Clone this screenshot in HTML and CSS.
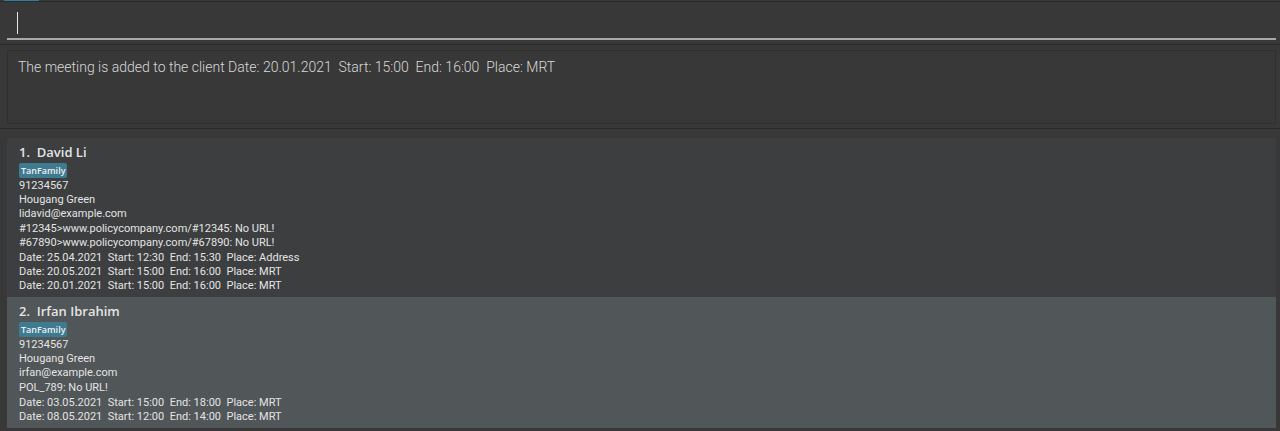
FILE: index.html
```
<!DOCTYPE html>
<html lang="en">
<head>
<meta charset="utf-8">
<meta name="viewport" content="width=device-width, initial-scale=1">
<title>Client book</title>
<link rel="stylesheet" href="styles.css">
</head>
<body>
<header class="menu"><span class="menu-marker"></span></header>
<section class="command">
  <input class="command-input" type="text" aria-label="Command">
  <span class="caret"></span>
</section>
<section class="result">
  <output class="result-box">The meeting is added to the client Date: 20.01.2021  Start: 15:00  End: 16:00  Place: MRT</output>
</section>
<main class="clients">
  <article class="card">
    <h2 class="name">1.  David Li</h2>
    <span class="tag">TanFamily</span>
    <div class="group">
      <p>91234567</p>
      <p>Hougang Green</p>
      <p>lidavid@example.com</p>
    </div>
    <div class="group">
      <p>#12345&gt;www.policycompany.com/#12345: No URL!</p>
      <p>#67890&gt;www.policycompany.com/#67890: No URL!</p>
    </div>
    <div class="group">
      <p>Date: 25.04.2021  Start: 12:30  End: 15:30  Place: Address</p>
      <p>Date: 20.05.2021  Start: 15:00  End: 16:00  Place: MRT</p>
      <p>Date: 20.01.2021  Start: 15:00  End: 16:00  Place: MRT</p>
    </div>
  </article>
  <article class="card card-alt">
    <h2 class="name">2.  Irfan Ibrahim</h2>
    <span class="tag">TanFamily</span>
    <div class="group">
      <p>91234567</p>
      <p>Hougang Green</p>
      <p>irfan@example.com</p>
    </div>
    <div class="group">
      <p>POL_789: No URL!</p>
    </div>
    <div class="group">
      <p>Date: 03.05.2021  Start: 15:00  End: 18:00  Place: MRT</p>
      <p>Date: 08.05.2021  Start: 12:00  End: 14:00  Place: MRT</p>
    </div>
  </article>
</main>
</body>
</html>
```
FILE: styles.css
```
* {
  box-sizing: border-box;
}

body {
  margin: 0;
  background: #383838;
  color: #e4e4e4;
  font-family: Roboto, "Open Sans", sans-serif;
  font-size: 11px;
  line-height: 14px;
}

.menu {
  height: 2px;
  padding-left: 4px;
  border-bottom: 1px solid #2b2b2b;
}

.menu-marker {
  display: block;
  width: 35px;
  height: 1px;
  background: #2f7f9c;
}

.command {
  position: relative;
  padding: 4px 4px 4px 7px;
  border-bottom: 1px solid #2b2b2b;
}

.command-input {
  display: block;
  width: 100%;
  height: 34px;
  padding: 4px 10px;
  border: 0;
  border-bottom: 2px solid #a9a9a9;
  outline: 0;
  background: transparent;
  color: #fff;
  font: inherit;
  font-size: 14px;
}

.caret {
  position: absolute;
  left: 17px;
  top: 10px;
  width: 1px;
  height: 22px;
  background: #e6e6e6;
}

.result {
  padding: 5px 4px 4px 7px;
  border-bottom: 1px solid #2b2b2b;
}

.result-box {
  display: block;
  min-height: 74px;
  padding: 6px 10px;
  border: 1px solid #2f2f2f;
  color: #d8d8d8;
  font-size: 14px;
  font-weight: 300;
  line-height: 20px;
  white-space: pre-wrap;
}

.clients {
  padding: 9px 4px 3px 7px;
}

.card {
  display: flex;
  flex-direction: column;
  align-items: flex-start;
  gap: 1px;
  padding: 5px 12px 4px;
  background: #3c3e3f;
}

.card-alt {
  background: #515658;
}

.name {
  margin: 0;
  font-family: "Open Sans", sans-serif;
  font-size: 13px;
  font-weight: 600;
  line-height: 19px;
  white-space: pre-wrap;
}

.tag {
  padding: 0 2px;
  border-radius: 2px;
  background: #3e7b91;
  color: #f0f0f0;
  font-family: "Open Sans", sans-serif;
  font-size: 9px;
  font-weight: 600;
  line-height: 15px;
}

.group p {
  margin: 0;
  white-space: pre-wrap;
}
```
